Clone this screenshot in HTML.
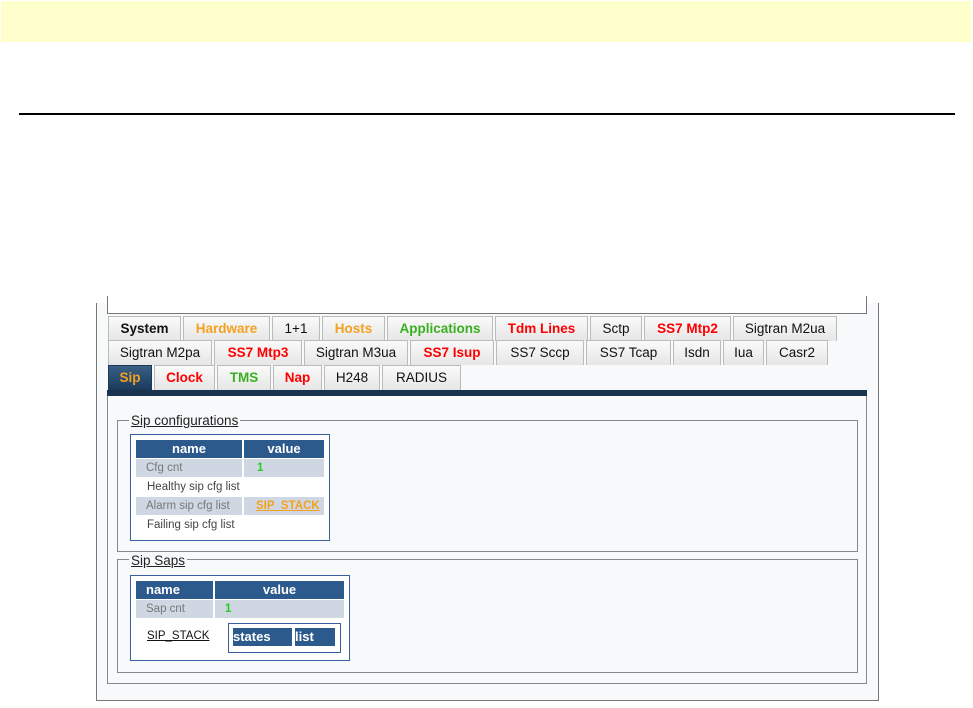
<!DOCTYPE html>
<html><head><meta charset="utf-8"><style>
*{margin:0;padding:0;box-sizing:border-box}
body{width:973px;height:708px;background:#fff;position:relative;overflow:hidden;font-family:"Liberation Sans",Arial,sans-serif}
.a{position:absolute}
.tab{position:absolute;height:25px;border:1px solid #bbb;border-bottom:none;background:linear-gradient(#fafafa,#e6e6e6);font-size:13.5px;text-align:center;line-height:23px;color:#111}
.b{font-weight:bold}
.o{color:#f5a020}.r{color:#f00}.g{color:#3ab020}
.hd{position:absolute;background:#2c5a8c;color:#fff;font-weight:bold;font-size:13px;line-height:18px;text-align:center}
.gr{position:absolute;background:#cfd8e2;font-size:11.5px;color:#777;line-height:18px;padding-left:10px}
.tx{position:absolute;font-size:11.5px;color:#444;line-height:18px}
.fs{position:absolute;border:1px solid #888;background:#f7f9fb}
.lg{position:absolute;background:#f7f9fb;font-size:13.5px;color:#222;text-decoration:underline;padding:0 2px;line-height:15px}
</style></head><body>
<div class="a" style="left:1px;top:1px;width:970px;height:41px;background:#ffffcc"></div>
<div class="a" style="left:19px;top:113px;width:936px;height:2px;background:#000"></div>

<div class="a" style="left:96px;top:303px;width:783px;height:398px;border:1px solid #777;border-top:none;background:#f8f9fb"></div>
<div class="a" style="left:107px;top:296px;width:760px;height:18px;border:1px solid #777;border-top:none;background:#fff"></div>
<div class="a" style="left:107px;top:390px;width:760px;height:294px;border:1px solid #888;border-top:none;background:#f8f9fb"></div>

<div class="tab b" style="left:108px;top:316px;width:73px">System</div>
<div class="tab b o" style="left:183px;top:316px;width:87px">Hardware</div>
<div class="tab" style="left:272px;top:316px;width:48px">1+1</div>
<div class="tab b o" style="left:322px;top:316px;width:63px">Hosts</div>
<div class="tab b g" style="left:387px;top:316px;width:106px">Applications</div>
<div class="tab b r" style="left:495px;top:316px;width:93px">Tdm Lines</div>
<div class="tab" style="left:590px;top:316px;width:52px">Sctp</div>
<div class="tab b r" style="left:644px;top:316px;width:87px">SS7 Mtp2</div>
<div class="tab" style="left:733px;top:316px;width:104px">Sigtran M2ua</div>

<div class="tab" style="left:108px;top:340px;width:104px">Sigtran M2pa</div>
<div class="tab b r" style="left:214px;top:340px;width:88px">SS7 Mtp3</div>
<div class="tab" style="left:304px;top:340px;width:104px">Sigtran M3ua</div>
<div class="tab b r" style="left:410px;top:340px;width:84px">SS7 Isup</div>
<div class="tab" style="left:496px;top:340px;width:88px">SS7 Sccp</div>
<div class="tab" style="left:586px;top:340px;width:85px">SS7 Tcap</div>
<div class="tab" style="left:673px;top:340px;width:48px">Isdn</div>
<div class="tab" style="left:723px;top:340px;width:41px">Iua</div>
<div class="tab" style="left:766px;top:340px;width:62px">Casr2</div>

<div class="tab b o" style="left:108px;top:365px;width:44px;background:linear-gradient(#3a5f85,#1a3a5a);border-color:#1a3a5a">Sip</div>
<div class="tab b r" style="left:154px;top:365px;width:61px">Clock</div>
<div class="tab b g" style="left:217px;top:365px;width:54px">TMS</div>
<div class="tab b r" style="left:273px;top:365px;width:49px">Nap</div>
<div class="tab" style="left:324px;top:365px;width:56px">H248</div>
<div class="tab" style="left:382px;top:365px;width:79px">RADIUS</div>
<div class="a" style="left:107px;top:390px;width:760px;height:6px;background:#1a3450"></div>

<div class="fs" style="left:117px;top:420px;width:741px;height:132px"></div>
<div class="lg" style="left:129px;top:413px">Sip configurations</div>
<div class="a" style="left:130px;top:434px;width:200px;height:107px;border:1px solid #3a5fa0;background:#fff"></div>
<div class="hd" style="left:136px;top:440px;width:106px">name</div>
<div class="hd" style="left:244px;top:440px;width:80px">value</div>
<div class="gr" style="left:136px;top:459px;width:106px">Cfg cnt</div>
<div class="gr" style="left:244px;top:459px;width:80px;color:#2c2;font-weight:bold;padding-left:13px">1</div>
<div class="tx" style="left:147px;top:478px">Healthy sip cfg list</div>
<div class="gr" style="left:136px;top:497px;width:106px">Alarm sip cfg list</div>
<div class="gr" style="left:244px;top:497px;width:80px;color:#f5a020;font-weight:bold;text-decoration:underline;padding-left:12px">SIP_STACK</div>
<div class="tx" style="left:147px;top:516px">Failing sip cfg list</div>

<div class="fs" style="left:117px;top:559px;width:741px;height:114px"></div>
<div class="lg" style="left:129px;top:553px">Sip Saps</div>
<div class="a" style="left:130px;top:575px;width:220px;height:86px;border:1px solid #3a5fa0;background:#fff"></div>
<div class="hd" style="left:136px;top:581px;width:77px;text-align:left;padding-left:10px">name</div>
<div class="hd" style="left:215px;top:581px;width:129px">value</div>
<div class="gr" style="left:136px;top:600px;width:77px">Sap cnt</div>
<div class="gr" style="left:215px;top:600px;width:129px;color:#2c2;font-weight:bold">1</div>
<div class="tx" style="left:147px;top:627px;color:#111;text-decoration:underline">SIP_STACK</div>
<div class="a" style="left:228px;top:623px;width:113px;height:30px;border:1px solid #3a5fa0;background:#fff"></div>
<div class="hd" style="left:233px;top:628px;width:59px;text-align:left">states</div>
<div class="hd" style="left:295px;top:628px;width:40px;text-align:left">list</div>
</body></html>
